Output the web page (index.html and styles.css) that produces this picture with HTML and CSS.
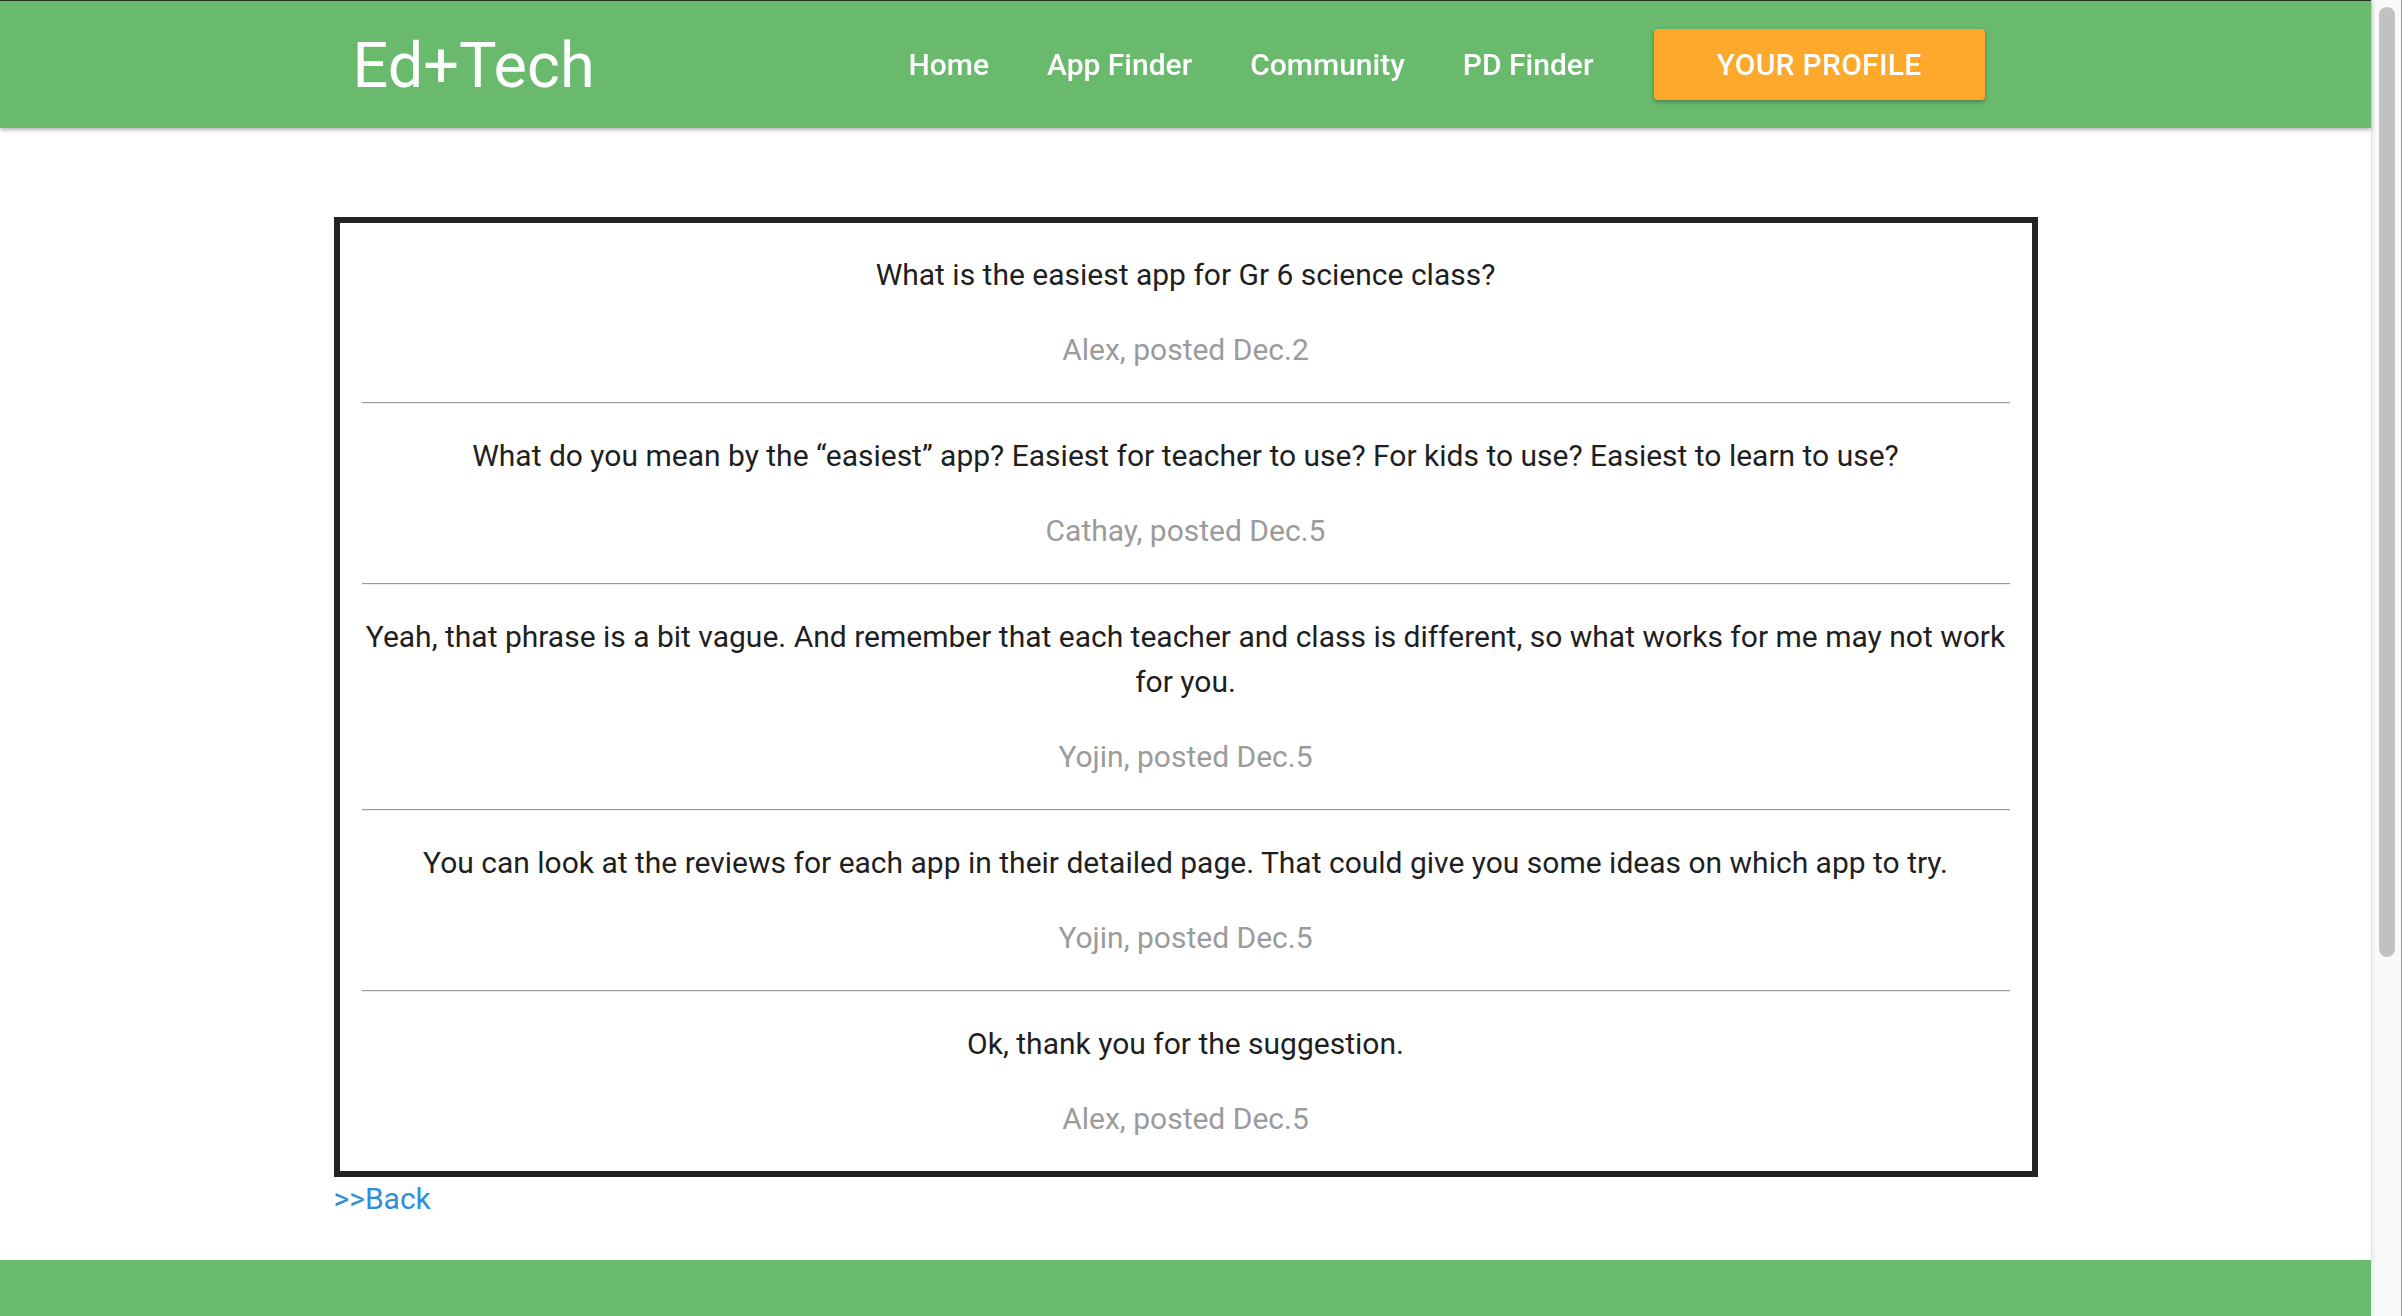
FILE: index.html
```html
<!DOCTYPE html>
<html lang="en">
<head>
<meta charset="utf-8">
<title>Ed+Tech Community</title>
<link rel="stylesheet" href="styles.css">
</head>
<body>
<div class="page">
  <header class="site-header">
    <div class="header-inner">
      <a class="logo" href="#">Ed+Tech</a>
      <nav class="nav">
        <a class="nav-link" href="#">Home</a>
        <a class="nav-link" href="#">App Finder</a>
        <a class="nav-link" href="#">Community</a>
        <a class="nav-link" href="#">PD Finder</a>
        <a class="profile-btn" href="#">YOUR PROFILE</a>
      </nav>
    </div>
  </header>

  <main class="main">
    <section class="thread">
      <article class="post">
        <p class="post-text">What is the easiest app for Gr 6 science class?</p>
        <p class="post-meta">Alex, posted Dec.2</p>
      </article>
      <hr class="divider">
      <article class="post">
        <p class="post-text">What do you mean by the “easiest” app? Easiest for teacher to use? For kids to use? Easiest to learn to use?</p>
        <p class="post-meta">Cathay, posted Dec.5</p>
      </article>
      <hr class="divider">
      <article class="post">
        <p class="post-text">Yeah, that phrase is a bit vague. And remember that each teacher and class is different, so what works for me may not work for you.</p>
        <p class="post-meta">Yojin, posted Dec.5</p>
      </article>
      <hr class="divider">
      <article class="post">
        <p class="post-text">You can look at the reviews for each app in their detailed page. That could give you some ideas on which app to try.</p>
        <p class="post-meta">Yojin, posted Dec.5</p>
      </article>
      <hr class="divider">
      <article class="post">
        <p class="post-text">Ok, thank you for the suggestion.</p>
        <p class="post-meta">Alex, posted Dec.5</p>
      </article>
    </section>
    <a class="back-link" href="#">&gt;&gt;Back</a>
  </main>

  <footer class="site-footer"></footer>
</div>

<div class="scrollbar" aria-hidden="true">
  <div class="scrollbar-thumb"></div>
</div>
</body>
</html>
```

FILE: styles.css
```css
html {
  background: #ffffff;
}

body {
  margin: 0;
  font-family: Roboto, "Liberation Sans", Arial, sans-serif;
  color: #1f1f1f;
  background: #ffffff;
}

a {
  text-decoration: none;
}

.page {
  margin-right: 31px;
}

.site-header {
  background: #6aba6e;
  border-top: 1px solid #1e3324;
  height: 127px;
  box-shadow: 0 2px 4px rgba(0, 0, 0, 0.3);
  position: relative;
  z-index: 1;
}

.header-inner {
  width: 1704px;
  height: 100%;
  margin: 0 auto;
  box-sizing: border-box;
  padding: 0 53px 0 19px;
  display: flex;
  align-items: center;
}

.logo {
  color: #ffffff;
  font-size: 63px;
  font-weight: 400;
  line-height: 1;
  margin-top: 2px;
}

.nav {
  margin-left: auto;
  display: flex;
  align-items: center;
  gap: 58px;
}

.nav-link {
  color: #ffffff;
  font-size: 30px;
  font-weight: 500;
  line-height: 45px;
}

.profile-btn {
  display: flex;
  align-items: center;
  justify-content: center;
  width: 331px;
  height: 71px;
  margin-left: 2px;
  background: #fea92b;
  color: #ffffff;
  font-size: 30px;
  font-weight: 500;
  letter-spacing: 0.3px;
  border-radius: 4px;
  box-shadow: 0 2px 4px rgba(0, 0, 0, 0.3);
}

.main {
  width: 1704px;
  margin: 89px auto 0;
  padding-bottom: 40px;
}

.thread {
  border: 6px solid #222222;
  padding: 0 22px;
}

.post {
  padding: 29px 0 30px;
  text-align: center;
}

.post-text,
.post-meta {
  margin: 0;
  font-size: 30px;
  line-height: 45px;
}

.post-text {
  color: #1f1f1f;
}

.post-meta {
  margin-top: 30px;
  color: #9b9b9b;
}

.divider {
  margin: 0;
  border: 0;
  border-top: 1px solid #9c9c9c;
  border-bottom: 1px solid #ececec;
  height: 0;
}

.back-link {
  display: inline-block;
  color: #2f8fd6;
  font-size: 30px;
  line-height: 43px;
}

.site-footer {
  background: #6aba6e;
  height: 200px;
}

.scrollbar {
  position: fixed;
  top: 0;
  right: 0;
  bottom: 0;
  width: 30px;
  background: #fafafa;
  border-left: 1px solid #e4e4e4;
  box-shadow: inset 3px 0 0 #f2f2f2, inset -1px 0 0 #9a9a9a;
}

.scrollbar-thumb {
  position: absolute;
  top: 7px;
  left: 7px;
  width: 16px;
  height: 950px;
  border-radius: 8px;
  background: #c1c1c1;
}
```
